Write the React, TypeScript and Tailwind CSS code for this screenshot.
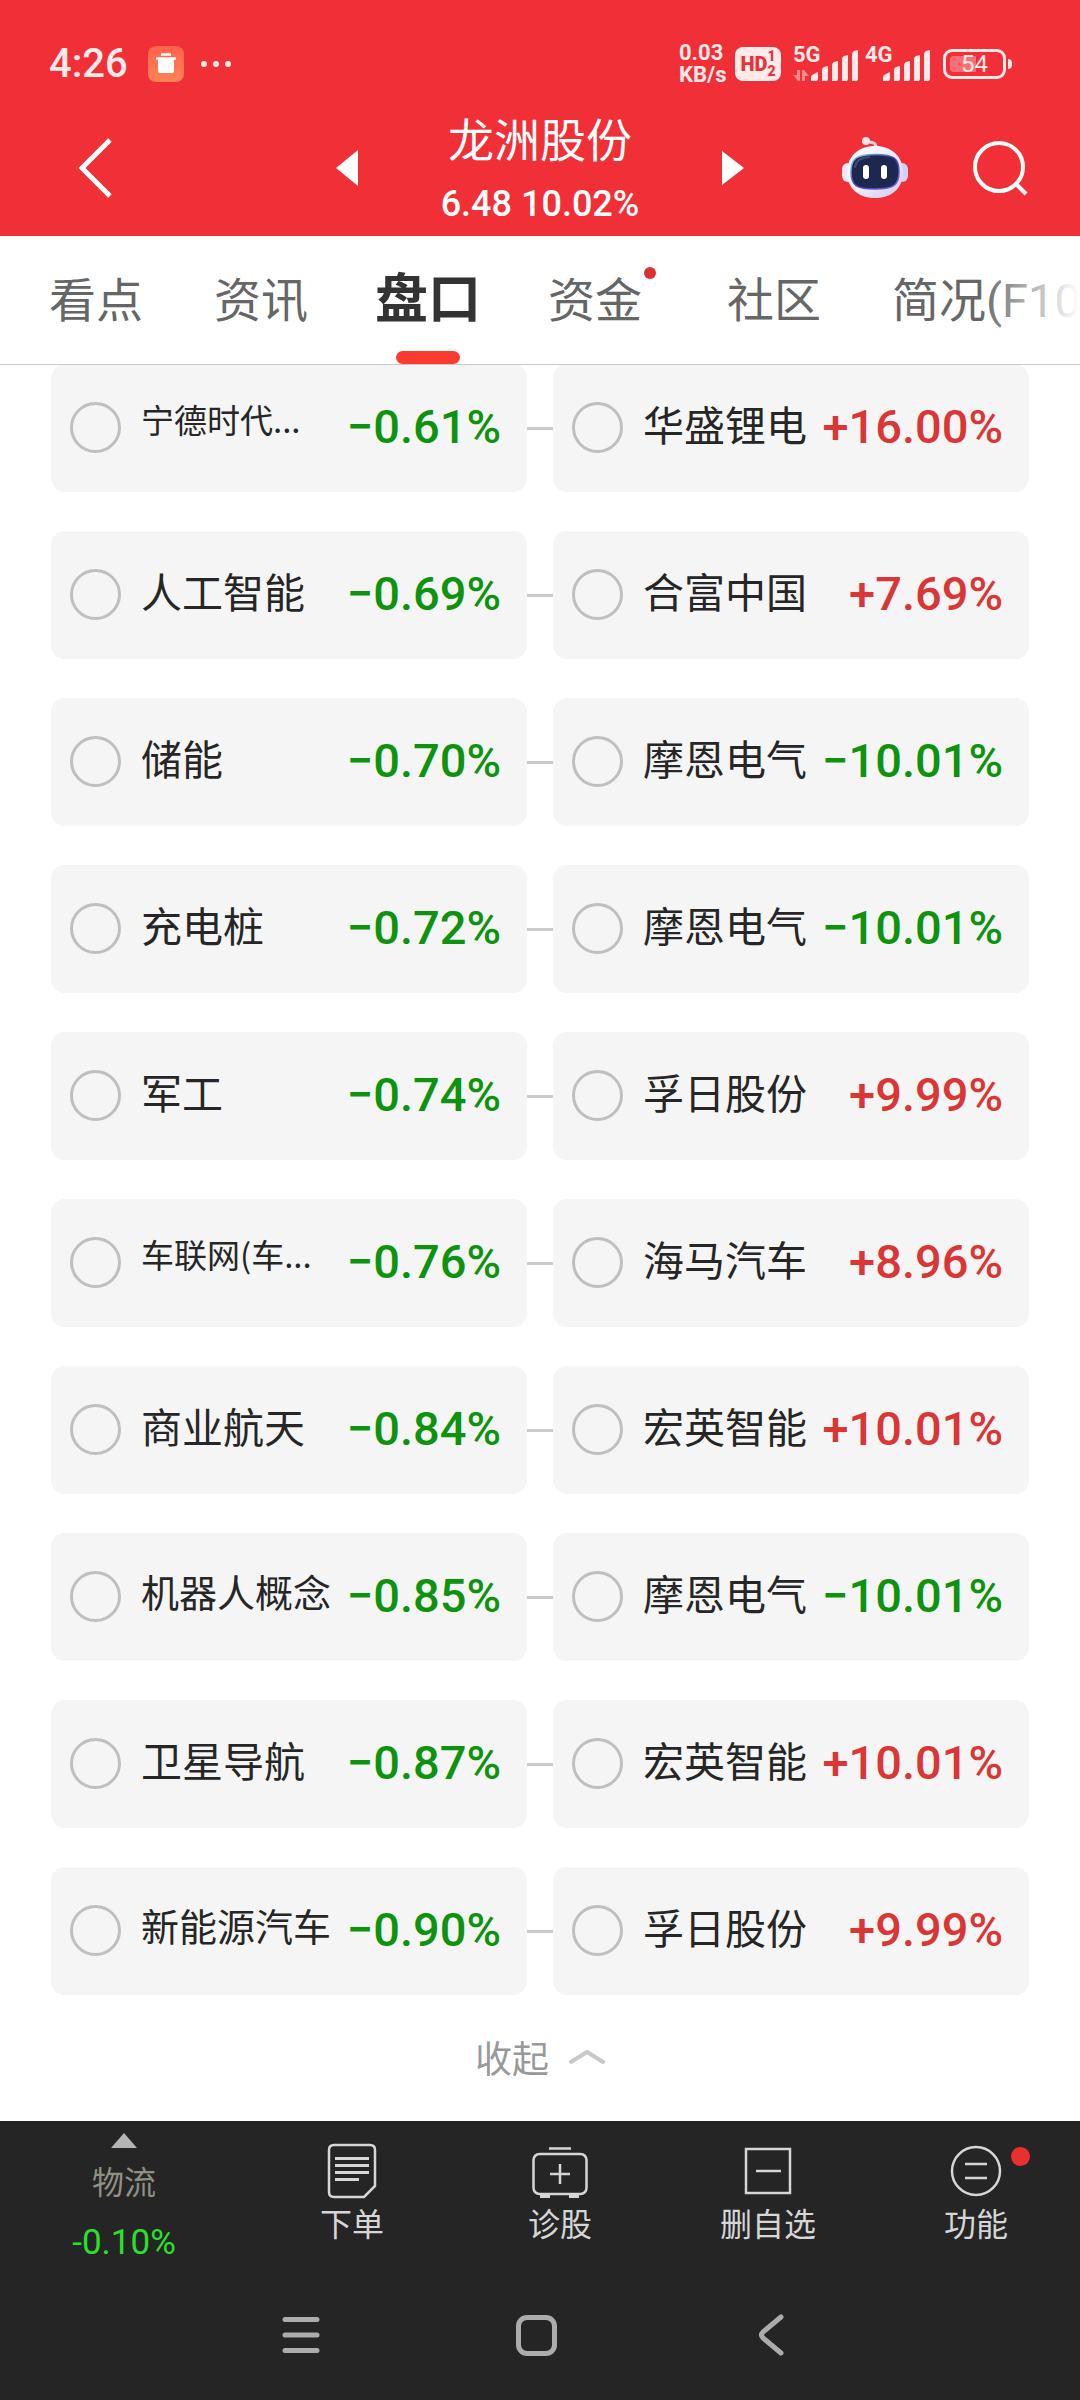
import { useState } from "react";
import type { ReactNode } from "react";
import clsx from "clsx";

type Stock = {
  name: string;
  change: string;
};

type Row = {
  concept: Stock;
  leader: Stock;
};

const rows: Row[] = [
  { concept: { name: "宁德时代...", change: "−0.61%" }, leader: { name: "华盛锂电", change: "+16.00%" } },
  { concept: { name: "人工智能", change: "−0.69%" }, leader: { name: "合富中国", change: "+7.69%" } },
  { concept: { name: "储能", change: "−0.70%" }, leader: { name: "摩恩电气", change: "−10.01%" } },
  { concept: { name: "充电桩", change: "−0.72%" }, leader: { name: "摩恩电气", change: "−10.01%" } },
  { concept: { name: "军工", change: "−0.74%" }, leader: { name: "孚日股份", change: "+9.99%" } },
  { concept: { name: "车联网(车...", change: "−0.76%" }, leader: { name: "海马汽车", change: "+8.96%" } },
  { concept: { name: "商业航天", change: "−0.84%" }, leader: { name: "宏英智能", change: "+10.01%" } },
  { concept: { name: "机器人概念", change: "−0.85%" }, leader: { name: "摩恩电气", change: "−10.01%" } },
  { concept: { name: "卫星导航", change: "−0.87%" }, leader: { name: "宏英智能", change: "+10.01%" } },
  { concept: { name: "新能源汽车", change: "−0.90%" }, leader: { name: "孚日股份", change: "+9.99%" } },
];

const tabs = [
  { label: "看点" },
  { label: "资讯" },
  { label: "盘口" },
  { label: "资金", dot: true },
  { label: "社区" },
  { label: "简况(F10)" },
];

// Long names step down in size so they still fit beside the percentage
const nameSize = (name: string) => {
  if (name.endsWith("...")) return "text-[33px]";
  if (name.length > 4) return "text-[38px]";
  return "text-[41px]";
};

const SignalBars = () => (
  <svg width="48" height="31" viewBox="0 0 48 31" fill="#ffe9e9">
    <path d="M0 31v-4q0-2 3-3l4-2v7q0 2-2 2z" />
    <path d="M11 31V20q0-2 2-3l4-1v13q0 2-2 2z" />
    <path d="M21 31V15q0-2 2-3l4-1v18q0 2-2 2z" />
    <path d="M31 31V9q0-2 2-3l4-1v24q0 2-2 2z" />
    <path d="M41 31V4q0-2 2-3l4-1v29q0 2-2 2z" />
  </svg>
);

const StatusBar = () => (
  <div className="flex items-center justify-between pt-10 pl-[49px] pr-[68px] text-[#ffe9e9] font-[Roboto,'Noto_Sans_CJK_SC',sans-serif]">
    <div className="flex h-12 items-center">
      <span className="text-[40px] leading-12 font-medium">4:26</span>
      <svg className="ml-5" width="36" height="36" viewBox="0 0 36 36">
        <defs>
          <linearGradient id="clean" x1="0" y1="0" x2="0" y2="1">
            <stop offset="0" stopColor="#ff6349" />
            <stop offset="1" stopColor="#ff8357" />
          </linearGradient>
        </defs>
        <rect width="36" height="36" rx="8" fill="url(#clean)" />
        <path d="M13 8.500h10M8 12.500h20" stroke="#fff" strokeWidth="2.500" />
        <path d="M10 12h16v13q0 2-2 2H12q-2 0-2-2z" fill="#fff" />
      </svg>
      <svg className="ml-4" width="32" height="8" viewBox="0 0 32 8" fill="#ffe9e9">
        <circle cx="4" cy="4" r="3" />
        <circle cx="16" cy="4" r="3" />
        <circle cx="28" cy="4" r="3" />
      </svg>
    </div>
    <div className="flex h-12 items-center">
      <div className="w-12 text-[22px] leading-[22px] font-bold">
        <div>0.03</div>
        <div>KB/s</div>
      </div>
      <div className="ml-2 flex h-[34px] w-[46px] items-center justify-center rounded-lg bg-[#ffe9e9] font-black text-[#e5353c]">
        <span className="text-[20px] leading-none">HD</span>
        <span className="flex flex-col text-[14px] leading-[15px]">
          <span>1</span>
          <span>2</span>
        </span>
      </div>
      <div className="ml-3 flex h-[34px] items-end">
        <div className="flex h-full w-[18px] flex-col justify-between">
          <span className="text-[22px] leading-4 font-bold">5G</span>
          <svg width="16" height="11" viewBox="0 0 16 11" fill="#ff8a8e">
            <path d="M4 0h3v11H5L0 5h4zM9 0h2l5 6h-4v5H9z" />
          </svg>
        </div>
        <SignalBars />
      </div>
      <div className="ml-[6px] flex h-[34px] items-end">
        <div className="h-full w-[18px]">
          <span className="block text-[22px] leading-4 font-bold">4G</span>
        </div>
        <SignalBars />
      </div>
      <div className="ml-3 flex items-center">
        <div className="relative flex h-[30px] w-[63px] items-center justify-center rounded-[9px] border-3 border-[#ffe9e9]">
          <div className="absolute inset-y-1 left-1 w-[26px] rounded-l bg-[#fa6f74]" />
          <span className="relative text-[24px] leading-6">54</span>
        </div>
        <div className="ml-0.5 h-2.5 w-1 rounded-r bg-[#ffe9e9]" />
      </div>
    </div>
  </div>
);

const Robot = () => (
  <svg width="66" height="64" viewBox="0 0 66 64">
    <defs>
      <linearGradient id="shell" x1="0" y1="0" x2="1" y2="1">
        <stop offset="0" stopColor="#fff" />
        <stop offset="0.500" stopColor="#efecfa" />
        <stop offset="1" stopColor="#d2c9f0" />
      </linearGradient>
      <linearGradient id="rim" x1="0" y1="0" x2="1" y2="1">
        <stop offset="0" stopColor="#8fd8e4" />
        <stop offset="0.500" stopColor="#4a3fb0" />
        <stop offset="1" stopColor="#7a66e0" />
      </linearGradient>
    </defs>
    <path d="M34 13q1-8-9-7" fill="none" stroke="#f7d3dc" strokeWidth="3" />
    <circle cx="24" cy="5" r="4" fill="#fde6ea" />
    <rect x="0" y="27" width="12" height="19" rx="6" fill="#efeafa" />
    <rect x="54" y="27" width="12" height="19" rx="6" fill="#d6cff4" />
    <path d="M33 10c16 0 28 10 28 26S50 62 33 62 5 52 5 36s12-26 28-26z" fill="url(#shell)" />
    <path
      d="M33 18.500c19 0 24 4 24 17.500s-6 17-24 17-24-3.500-24-17 5-17.500 24-17.500z"
      fill="#1c2850"
      stroke="url(#rim)"
      strokeWidth="1.500"
    />
    <path d="M13 31q1-9 14-10" fill="none" stroke="#3f4a75" strokeWidth="2" strokeLinecap="round" />
    <rect x="21" y="29" width="6" height="14" rx="3" fill="#fff" />
    <rect x="39" y="29" width="6" height="14" rx="3" fill="#fff" />
  </svg>
);

const Header = () => (
  <header className="bg-[#f12f37] text-white">
    <StatusBar />
    <div className="grid grid-cols-[1fr_auto_1fr] items-center pt-3">
      <div className="flex pl-[78px]">
        <button type="button" aria-label="返回">
          <svg width="36" height="60" viewBox="0 0 36 60" fill="none" stroke="#fff" strokeWidth="5">
            <path d="M32 2 4 30l28 28" />
          </svg>
        </button>
      </div>
      <div className="flex w-[408px] items-center justify-between">
        <button type="button" aria-label="上一只">
          <svg width="22" height="36" viewBox="0 0 22 36" fill="#fff">
            <path d="M22 0v36L0 18z" />
          </svg>
        </button>
        <div className="pt-2.5 text-center">
          <h1 className="text-[46px] leading-[62px] font-[Roboto,'Noto_Sans_CJK_SC',sans-serif]">龙洲股份</h1>
          <p className="text-[36px] leading-16 font-medium font-[Roboto,sans-serif]">6.48 10.02%</p>
        </div>
        <button type="button" aria-label="下一只">
          <svg width="22" height="36" viewBox="0 0 22 36" fill="#fff">
            <path d="M0 1v34l22-17z" />
          </svg>
        </button>
      </div>
      <div className="flex items-center justify-end gap-16 pr-[51px]">
        <button type="button" aria-label="智能助手">
          <Robot />
        </button>
        <button type="button" aria-label="搜索">
          <svg width="57" height="56" viewBox="0 0 57 56" fill="none" stroke="#fff" strokeWidth="4">
            <circle cx="27" cy="27" r="24" />
            <path d="m44 44 10 10" />
          </svg>
        </button>
      </div>
    </div>
  </header>
);

const TabBar = () => {
  const [active, setActive] = useState("盘口");

  return (
    <nav className="relative h-[129px] overflow-hidden border-b border-[#c8c8c8] bg-white font-[Roboto,'Noto_Sans_CJK_SC',sans-serif]">
      <div className="flex h-full gap-[71px] pl-[49px]">
        {tabs.map((tab) => (
          <button
            key={tab.label}
            type="button"
            onClick={() => setActive(tab.label)}
            className={clsx(
              "relative flex h-full shrink-0 items-center pt-0.5 whitespace-nowrap",
              tab.dot && "pr-3.5",
              active === tab.label ? "-mx-1 text-[53px] font-bold text-[#333]" : "text-[47px] text-[#666]"
            )}
          >
            {tab.label}
            {tab.dot && <span className="absolute top-[31px] right-0 h-3 w-3 rounded-full bg-[#dc2f33]" />}
            {active === tab.label && (
              <span className="absolute bottom-0 left-1/2 h-[13px] w-16 -translate-x-1/2 rounded-full bg-[#fb3b31]" />
            )}
          </button>
        ))}
      </div>
      <div className="pointer-events-none absolute inset-y-0 right-0 w-[100px] bg-gradient-to-r from-white/0 to-white" />
    </nav>
  );
};

const StockCard = ({ stock }: { stock: Stock }) => (
  <label className="flex h-32 min-w-0 flex-1 items-center rounded-[14px] bg-[#f5f5f5] pr-[26px] pb-0.5 pl-[19px]">
    <input
      type="checkbox"
      className="h-[51px] w-[51px] shrink-0 appearance-none rounded-full border-3 border-[#bfbfbf] checked:border-[#f12f37] checked:bg-[#f12f37]"
    />
    <span className="ml-5 flex h-12 flex-1 items-start whitespace-nowrap text-[#262626]">
      <span className={clsx("leading-none", nameSize(stock.name))}>{stock.name}</span>
    </span>
    <span
      className={clsx(
        "text-[47px] leading-12 font-medium font-[Roboto,sans-serif]",
        stock.change.startsWith("+") ? "text-[#db3636]" : "text-[#0d930d]"
      )}
    >
      {stock.change}
    </span>
  </label>
);

type ToolButtonProps = {
  label: string;
  dot?: boolean;
  children: ReactNode;
};

const ToolButton = ({ label, dot, children }: ToolButtonProps) => (
  <button type="button" className="flex flex-1 flex-col items-center pt-5">
    <span className="relative">
      <svg
        className="block"
        width="60"
        height="60"
        viewBox="0 0 60 60"
        fill="none"
        stroke="#d6d6d6"
        strokeWidth="2.500"
      >
        {children}
      </svg>
      {dot && <span className="absolute top-1.5 -right-6 h-[19px] w-[19px] rounded-full bg-[#e83030]" />}
    </span>
    <span className="text-[32px] leading-[42px] text-[#d6d6d6]">{label}</span>
  </button>
);

const BottomBar = () => (
  <footer className="bg-[#252525]">
    <div className="flex h-[149px]">
      <button type="button" className="flex w-[248px] flex-col items-center pt-3">
        <svg className="shrink-0" width="26" height="15" viewBox="0 0 26 15" fill="#b4b4b4">
          <path d="M13 0 26 15H0z" />
        </svg>
        <span className="mt-1.5 text-[32px] leading-[52px] text-[#8f9084]">物流</span>
        <span className="mt-3 text-[35px] leading-[50px] text-[#2be02b] font-[Roboto,sans-serif]">-0.10%</span>
      </button>
      <ToolButton label="下单">
        <path d="M12 4h36q5 0 5 5v36L42 56H12q-5 0-5-5V9q0-5 5-5z" />
        <path d="M13 17.500h34M13 24.500h34M13 31.500h34M13 38.500h24" strokeWidth="3" />
      </ToolButton>
      <ToolButton label="诊股">
        <rect x="3.500" y="13" width="53" height="40" rx="6" />
        <path d="M19 7.500h22M30 23v20M20 33h20" />
        <path d="M10 55h10M39 55h10" strokeWidth="4" />
      </ToolButton>
      <ToolButton label="删自选">
        <rect x="8" y="8" width="44" height="44" />
        <path d="M18 30h25" />
      </ToolButton>
      <ToolButton label="功能" dot>
        <circle cx="30" cy="30" r="24" />
        <path d="M19 23h22M19 37h22" />
      </ToolButton>
    </div>
    <div className="flex h-[130px] justify-center pr-2">
      <button type="button" aria-label="最近任务" className="flex w-[235px] items-center justify-center">
        <svg width="38" height="38" viewBox="0 0 38 38" stroke="#acacac" strokeWidth="5" strokeLinecap="round">
          <path d="M3 3.500h32M3 19h32M3 34.500h32" />
        </svg>
      </button>
      <button type="button" aria-label="主屏幕" className="flex w-[235px] items-center justify-center">
        <span className="h-[41px] w-[41px] rounded-[11px] border-5 border-[#acacac]" />
      </button>
      <button type="button" aria-label="返回" className="flex w-[235px] items-center justify-center">
        <svg
          width="26"
          height="42"
          viewBox="0 0 26 42"
          fill="none"
          stroke="#acacac"
          strokeWidth="5"
          strokeLinecap="round"
          strokeLinejoin="round"
        >
          <path d="M23 3 5 18q-3 3 0 6l18 15" />
        </svg>
      </button>
    </div>
  </footer>
);

export default function App() {
  return (
    <div className="flex min-h-screen flex-col bg-white font-['Noto_Sans_CJK_SC',sans-serif]">
      <Header />
      <TabBar />

      <main className="-mt-px flex-1 px-[51px]">
        <ul className="flex flex-col gap-[39px]">
          {rows.map((row) => (
            <li key={row.concept.name} className="flex items-center">
              <StockCard stock={row.concept} />
              <span className="h-[3px] w-[26px] bg-[#c9c9c9]" />
              <StockCard stock={row.leader} />
            </li>
          ))}
        </ul>
        <button type="button" className="flex h-[126px] w-full items-center justify-center gap-5 pb-0.5 text-[#999]">
          <span className="text-[37px] leading-none">收起</span>
          <svg
            width="36"
            height="16"
            viewBox="0 0 36 16"
            fill="none"
            stroke="#c8c8c8"
            strokeWidth="4"
            strokeLinecap="round"
            strokeLinejoin="round"
          >
            <path d="M2 13 18 3l16 10" />
          </svg>
        </button>
      </main>

      <BottomBar />
    </div>
  );
}
